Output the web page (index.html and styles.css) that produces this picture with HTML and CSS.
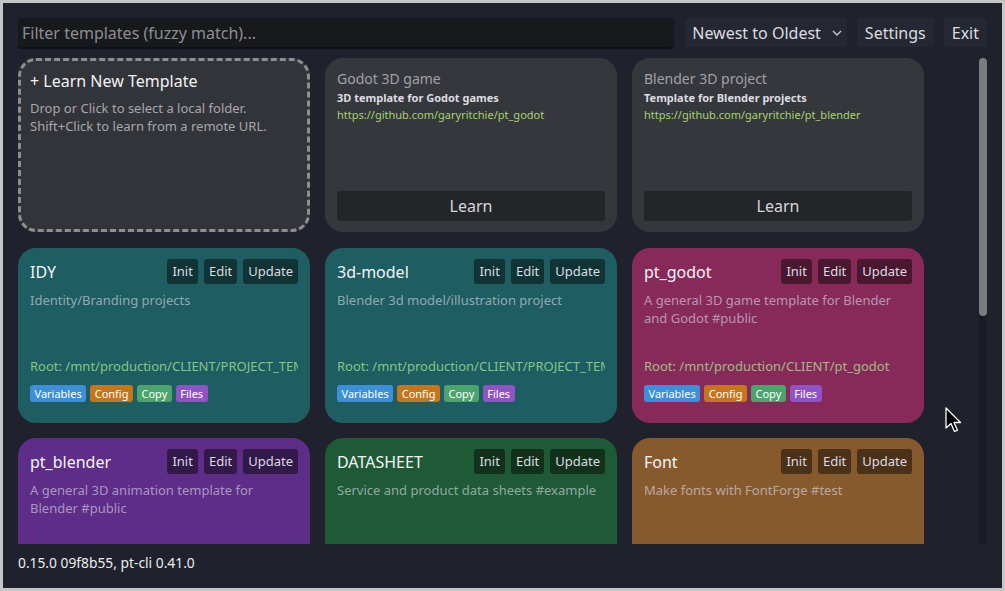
FILE: index.html
```html
<!DOCTYPE html>
<html lang="en">
<head>
    <meta charset="UTF-8">
    <title>Project Templates</title>
    <link rel="stylesheet" href="styles.css">
</head>
<body>
    <div class="window">
        <div class="toolbar">
            <div class="filter">Filter templates (fuzzy match)...</div>
            <div class="tool sort">Newest to Oldest
                <svg class="chevron" width="10" height="6" viewBox="0 0 10 6"><path d="M1 1 L5 5 L9 1" fill="none" stroke="#c8c8cc" stroke-width="1.4"/></svg>
            </div>
            <div class="tool">Settings</div>
            <div class="tool">Exit</div>
        </div>

        <div class="main">
            <div class="grid">
                <div class="card learn-new">
                    <div class="learn-title">+ Learn New Template</div>
                    <div class="learn-desc">Drop or Click to select a local folder.<br>Shift+Click to learn from a remote URL.</div>
                </div>
                <div class="card remote">
                    <div class="remote-title">Godot 3D game</div>
                    <div class="remote-sub">3D template for Godot games</div>
                    <div class="remote-url">https://github.com/garyritchie/pt_godot</div>
                    <div class="learn-btn">Learn</div>
                </div>
                <div class="card remote">
                    <div class="remote-title">Blender 3D project</div>
                    <div class="remote-sub">Template for Blender projects</div>
                    <div class="remote-url">https://github.com/garyritchie/pt_blender</div>
                    <div class="learn-btn">Learn</div>
                </div>

                <div class="card tpl teal">
                    <div class="tpl-head">
                        <div class="tpl-name">IDY</div>
                        <div class="tpl-actions"><span class="act">Init</span><span class="act">Edit</span><span class="act">Update</span></div>
                    </div>
                    <div class="tpl-desc">Identity/Branding projects</div>
                    <div class="tpl-root">Root: /mnt/production/CLIENT/PROJECT_TEMPLATES/IDY</div>
                    <div class="tags"><span class="tag blue">Variables</span><span class="tag orange">Config</span><span class="tag green">Copy</span><span class="tag purple">Files</span></div>
                </div>
                <div class="card tpl teal">
                    <div class="tpl-head">
                        <div class="tpl-name">3d-model</div>
                        <div class="tpl-actions"><span class="act">Init</span><span class="act">Edit</span><span class="act">Update</span></div>
                    </div>
                    <div class="tpl-desc">Blender 3d model/illustration project</div>
                    <div class="tpl-root">Root: /mnt/production/CLIENT/PROJECT_TEMPLATES/3d-model</div>
                    <div class="tags"><span class="tag blue">Variables</span><span class="tag orange">Config</span><span class="tag green">Copy</span><span class="tag purple">Files</span></div>
                </div>
                <div class="card tpl magenta">
                    <div class="tpl-head">
                        <div class="tpl-name">pt_godot</div>
                        <div class="tpl-actions"><span class="act">Init</span><span class="act">Edit</span><span class="act">Update</span></div>
                    </div>
                    <div class="tpl-desc">A general 3D game template for Blender and Godot #public</div>
                    <div class="tpl-root">Root: /mnt/production/CLIENT/pt_godot</div>
                    <div class="tags"><span class="tag blue">Variables</span><span class="tag orange">Config</span><span class="tag green">Copy</span><span class="tag purple">Files</span></div>
                </div>

                <div class="card tpl violet">
                    <div class="tpl-head">
                        <div class="tpl-name">pt_blender</div>
                        <div class="tpl-actions"><span class="act">Init</span><span class="act">Edit</span><span class="act">Update</span></div>
                    </div>
                    <div class="tpl-desc">A general 3D animation template for Blender #public</div>
                    <div class="tpl-root">Root: /mnt/production/CLIENT/pt_blender</div>
                    <div class="tags"><span class="tag blue">Variables</span><span class="tag orange">Config</span><span class="tag green">Copy</span><span class="tag purple">Files</span></div>
                </div>
                <div class="card tpl forest">
                    <div class="tpl-head">
                        <div class="tpl-name">DATASHEET</div>
                        <div class="tpl-actions"><span class="act">Init</span><span class="act">Edit</span><span class="act">Update</span></div>
                    </div>
                    <div class="tpl-desc">Service and product data sheets #example</div>
                    <div class="tpl-root">Root: /mnt/production/CLIENT/DATASHEET</div>
                    <div class="tags"><span class="tag blue">Variables</span><span class="tag orange">Config</span><span class="tag green">Copy</span><span class="tag purple">Files</span></div>
                </div>
                <div class="card tpl amber">
                    <div class="tpl-head">
                        <div class="tpl-name">Font</div>
                        <div class="tpl-actions"><span class="act">Init</span><span class="act">Edit</span><span class="act">Update</span></div>
                    </div>
                    <div class="tpl-desc">Make fonts with FontForge #test</div>
                    <div class="tpl-root">Root: /mnt/production/CLIENT/Font</div>
                    <div class="tags"><span class="tag blue">Variables</span><span class="tag orange">Config</span><span class="tag green">Copy</span><span class="tag purple">Files</span></div>
                </div>
            </div>
            <div class="scrollbar"><div class="thumb"></div></div>
        </div>

        <div class="footer">0.15.0 09f8b55, pt-cli 0.41.0</div>

        <svg class="cursor" width="18" height="27" viewBox="0 0 18 27">
            <path d="M1 1 L1 21 L6 16.5 L9.5 24.5 L12.5 23.2 L9 15.5 L15.5 15.5 Z" fill="#000" stroke="#fff" stroke-width="1.3" stroke-linejoin="round"/>
        </svg>
    </div>
</body>
</html>
```

FILE: styles.css
```css
body {
    margin: 0;
    background-color: #c6c6c6;
    font-family: "Noto Sans", "Open Sans", sans-serif;
}

.window {
    position: relative;
    margin: 3px;
    width: 969px;
    height: 555px;
    padding: 15px;
    background-color: #1f222c;
    display: flex;
    flex-direction: column;
}

.toolbar {
    display: flex;
    gap: 10px;
    height: 29px;
}

.filter {
    flex: 1;
    background-color: #18191d;
    border-radius: 3px;
    box-shadow: 0 2px 1px rgba(0, 0, 0, 0.5);
    color: #8d8e94;
    font-size: 16px;
    line-height: 30px;
    padding-left: 4px;
    margin-right: 1px;
}

.tool {
    background-color: #252832;
    border-radius: 3px;
    color: #dcdce0;
    font-size: 16px;
    line-height: 30px;
    padding: 0 8px;
}

.sort {
    display: flex;
    align-items: center;
    gap: 11px;
    padding: 0 5px 0 7px;
}

.main {
    display: flex;
    justify-content: space-between;
    margin-top: 11px;
    height: 486px;
}

.grid {
    display: grid;
    grid-template-columns: repeat(3, 292px);
    grid-auto-rows: 175px;
    gap: 15px;
    overflow: hidden;
    width: 906px;
}

.card {
    border-radius: 18px;
    box-sizing: border-box;
    overflow: hidden;
    display: flex;
    flex-direction: column;
}

.learn-new {
    background-color: #333439;
    border: 3px dashed #8e8e90;
    padding: 10px 9px;
    height: 174px;
}

.learn-title {
    color: #f2f2f4;
    font-size: 16px;
    line-height: 20px;
}

.learn-desc {
    color: #a6a7ac;
    font-size: 13px;
    line-height: 18px;
    margin-top: 8px;
}

.remote {
    background-color: #36373c;
    padding: 11px 12px 11px;
    height: 174px;
}

.remote-title {
    color: #a0a1a8;
    font-size: 14px;
    line-height: 20px;
}

.remote-sub {
    color: #dcdce2;
    font-size: 11px;
    font-weight: bold;
    line-height: 16px;
    margin-top: 1px;
}

.remote-url {
    color: #a8d26e;
    font-size: 11px;
    line-height: 16px;
    margin-top: 1px;
}

.learn-btn {
    margin-top: auto;
    height: 30px;
    line-height: 30px;
    border-radius: 3px;
    background-color: #242528;
    color: #d6d6de;
    font-size: 16px;
    text-align: center;
}

.tpl {
    padding: 11px 12px 21px;
}

.tpl-head {
    display: flex;
    justify-content: space-between;
    align-items: center;
    height: 25px;
}

.tpl-name {
    color: #f4f4f6;
    font-size: 16px;
}

.tpl-actions {
    display: flex;
    gap: 6px;
}

.act {
    background-color: rgba(0, 0, 0, 0.45);
    border-radius: 3px;
    color: #dcdce0;
    font-size: 13px;
    line-height: 25px;
    padding: 0 5px;
}

.tpl-desc {
    color: rgba(220, 220, 230, 0.62);
    font-size: 13px;
    line-height: 18px;
    margin-top: 7px;
    flex: 1;
}

.tpl-root {
    color: rgba(170, 228, 145, 0.78);
    font-size: 13px;
    line-height: 18px;
    white-space: nowrap;
    overflow: hidden;
}

.tags {
    display: flex;
    gap: 4px;
    margin-top: 10px;
}

.tag {
    color: #fff;
    font-size: 11px;
    line-height: 17px;
    padding: 0 4.5px;
    border-radius: 3px;
}

.teal { background-color: #1e5d62; }
.magenta { background-color: #872a59; }
.violet { background-color: #5d2d88; }
.forest { background-color: #1f5a36; }
.amber { background-color: #875a2d; }

.blue { background-color: #3d8fd8; }
.orange { background-color: #c5761b; }
.green { background-color: #4aa46b; }
.purple { background-color: #9053c6; }

.scrollbar {
    width: 8px;
    height: 487px;
    border-radius: 4px;
    background-color: #191b22;
}

.thumb {
    height: 258px;
    border-radius: 4px;
    background-color: #7c7c80;
}

.footer {
    margin-top: 9px;
    color: #ececf0;
    font-size: 13.8px;
    line-height: 20px;
}

.cursor {
    position: absolute;
    left: 942px;
    top: 404px;
}
```
